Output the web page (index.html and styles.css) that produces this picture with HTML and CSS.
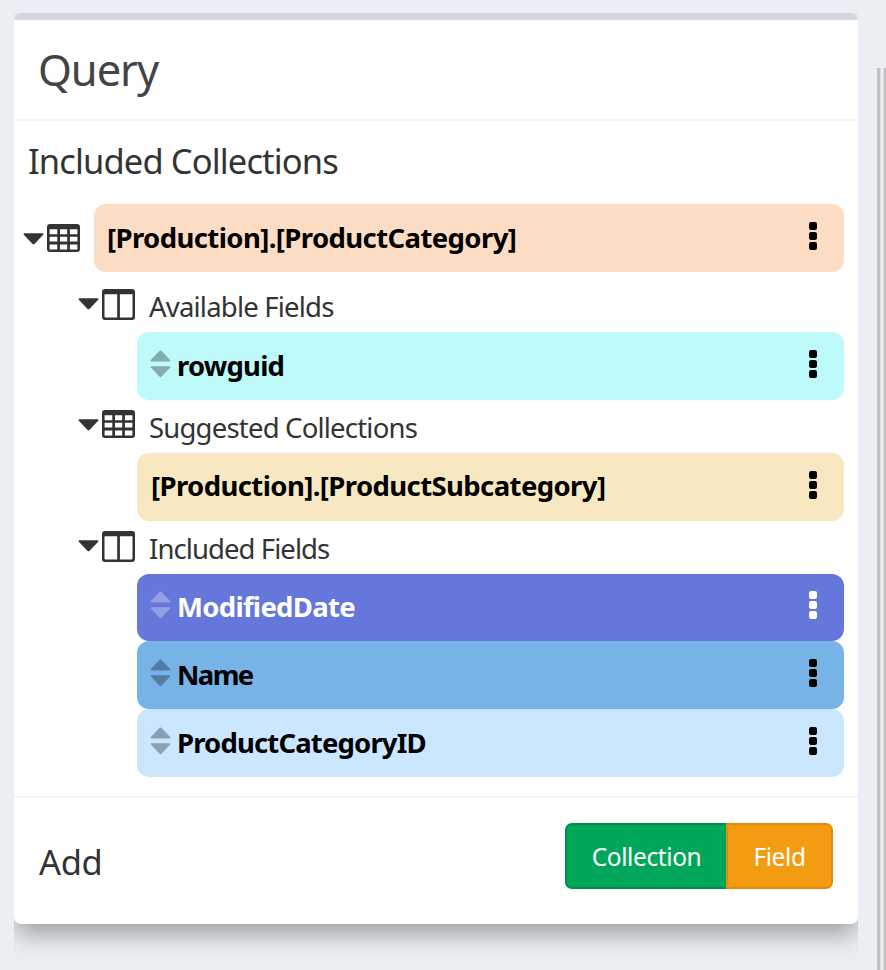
FILE: index.html
```
<!DOCTYPE html>
<html lang="en">
<head>
<meta charset="utf-8">
<title>Query</title>
<link rel="stylesheet" href="styles.css">
</head>
<body>
<svg class="defs" width="0" height="0">
  <symbol id="caret" viewBox="0 0 21 12"><path d="M1.3 0.3H19.7Q21 0.6 20.2 1.7L11.4 10.9Q10.5 11.7 9.6 10.9L0.8 1.7Q0 0.6 1.3 0.3Z" fill="currentColor"/></symbol>
  <symbol id="table" viewBox="0 0 33 28"><path fill-rule="evenodd" fill="currentColor" d="M3 0H30Q33 0 33 3V25Q33 28 30 28H3Q0 28 0 25V3Q0 0 3 0ZM2.6 5.2V10.2H10.3V5.2ZM13 5.2V10.2H20.2V5.2ZM22.9 5.2V10.2H30.4V5.2ZM2.6 12.8V17.6H10.3V12.8ZM13 12.8V17.6H20.2V12.8ZM22.9 12.8V17.6H30.4V12.8ZM2.6 20.4V25.4H10.3V20.4ZM13 20.4V25.4H20.2V20.4ZM22.9 20.4V25.4H30.4V20.4Z"/></symbol>
  <symbol id="columns" viewBox="0 0 33 31"><path fill-rule="evenodd" fill="currentColor" d="M3 0H30Q33 0 33 3V28Q33 31 30 31H3Q0 31 0 28V3Q0 0 3 0ZM2.5 5.2V27.6Q2.5 28.4 3.3 28.4H15.2V5.2ZM17.9 5.2V28.4H29.7Q30.5 28.4 30.5 27.6V5.2Z"/></symbol>
  <symbol id="sort" viewBox="0 0 21 28"><path fill="currentColor" d="M1.3 11.4H19.7Q21 11 20.2 10L11.4 0.8Q10.5 0 9.6 0.8L0.8 10Q0 11 1.3 11.4ZM1.3 16.2H19.7Q21 16.6 20.2 17.6L11.4 26.8Q10.5 27.6 9.6 26.8L0.8 17.6Q0 16.6 1.3 16.2Z"/></symbol>
  <symbol id="dots" viewBox="0 0 8 28"><g fill="currentColor"><rect width="8" height="8" rx="2.2"/><rect y="10" width="8" height="8" rx="2.2"/><rect y="20" width="8" height="8" rx="2.2"/></g></symbol>
</svg>
<main class="pane">
  <section class="card">
    <header class="card-header"><h1>Query</h1></header>
    <div class="card-body">
      <h2>Included Collections</h2>
      <div class="root">
        <svg class="caret"><use href="#caret"/></svg>
        <svg class="table"><use href="#table"/></svg>
        <div class="item peach"><span class="name root-name">[Production].[ProductCategory]</span><svg class="dots"><use href="#dots"/></svg></div>
      </div>
      <div class="group">
        <div class="label"><svg class="caret"><use href="#caret"/></svg><svg class="columns"><use href="#columns"/></svg><span class="available">Available Fields</span></div>
        <div class="item cyan"><svg class="sort"><use href="#sort"/></svg><span class="name rowguid">rowguid</span><svg class="dots"><use href="#dots"/></svg></div>
      </div>
      <div class="group">
        <div class="label"><svg class="caret"><use href="#caret"/></svg><svg class="table"><use href="#table"/></svg><span class="suggested">Suggested Collections</span></div>
        <div class="item cream"><span class="name sub-name">[Production].[ProductSubcategory]</span><svg class="dots"><use href="#dots"/></svg></div>
      </div>
      <div class="group">
        <div class="label"><svg class="caret"><use href="#caret"/></svg><svg class="columns"><use href="#columns"/></svg><span class="included">Included Fields</span></div>
        <div class="item indigo"><svg class="sort"><use href="#sort"/></svg><span class="name modified">ModifiedDate</span><svg class="dots"><use href="#dots"/></svg></div>
        <div class="item blue"><svg class="sort"><use href="#sort"/></svg><span class="name short">Name</span><svg class="dots"><use href="#dots"/></svg></div>
        <div class="item pale"><svg class="sort"><use href="#sort"/></svg><span class="name category">ProductCategoryID</span><svg class="dots"><use href="#dots"/></svg></div>
      </div>
    </div>
    <footer class="card-footer">
      <span class="add">Add</span>
      <div class="buttons"><button class="collection">Collection</button><button class="field">Field</button></div>
    </footer>
  </section>
</main>
<div class="gutter"></div>
</body>
</html>
```
FILE: styles.css
```
* { box-sizing: border-box; }
body {
  margin: 0;
  height: 970px;
  overflow: hidden;
  display: flex;
  background: #ebeef3;
  color: #333;
  font-family: "Noto Sans", "Open Sans", sans-serif;
}
.defs { display: none; }
svg { display: block; flex: none; }
.pane { width: 844px; margin: 13px 0 0 14px; overflow: hidden; }
.card {
  height: 911px;
  background: #fff;
  border-top: 7px solid #d2d6de;
  border-radius: 7px;
  box-shadow: 0 12px 24px -2px rgba(0, 0, 0, .34);
}
h1, h2 { margin: 0; font-weight: 400; white-space: nowrap; }
.card-header { height: 101px; padding-left: 24px; border-bottom: 2px solid #f4f4f4; }
h1 { color: #444; font-size: 43.5px; line-height: 99px; letter-spacing: -1.1px; }
.card-body { height: 675px; padding: 0 14px 0 9px; }
h2 { height: 83px; padding-left: 5px; font-size: 34.5px; line-height: 80px; letter-spacing: -.87px; }
.caret { width: 21px; height: 12px; }
.table { width: 33px; height: 28px; }
.columns { width: 33px; height: 31px; }
.root { display: flex; margin-bottom: 7px; }
.root > .caret { margin-top: 29px; }
.root > .table { margin: 20px 14px 0 3px; }
.item {
  display: flex;
  flex: 1;
  height: 68px;
  padding: 0 27px 0 13px;
  border-radius: 12px;
  color: #000;
}
.name { font-size: 27.5px; font-weight: 700; line-height: 67px; white-space: nowrap; letter-spacing: -.8px; }
.root-name { letter-spacing: -.6px; }
.sub-name { padding-left: 1px; line-height: 65px; letter-spacing: -.6px; }
.modified { line-height: 65px; letter-spacing: -.7px; }
.short { letter-spacing: -1.6px; }
.category { letter-spacing: -.85px; }
.dots { width: 8px; height: 28px; margin: 18px 0 0 auto; }
.group { padding-left: 114px; }
.label {
  display: flex;
  height: 53px;
  margin-left: -59px;
  font-size: 27.5px;
  line-height: 56px;
  white-space: nowrap;
  letter-spacing: -.8px;
}
.included { letter-spacing: -.92px; }
.label .caret { margin-top: 19px; }
.label .table, .label .columns { margin: 10px 14px 0 3px; }
.sort { width: 21px; height: 28px; margin: 18px 6.5px 0 -.5px; opacity: .3; }
.peach { background: #fcdcc3; }
.cyan { background: #bffafb; }
.cream { background: #f8e8c1; }
.indigo { height: 67px; background: #6577da; color: #fff; }
.indigo .sort, .indigo .dots { margin-top: 17px; }
.blue { background: #78b3e8; }
.pale { background: #cbe7ff; }
.card-footer {
  display: flex;
  justify-content: space-between;
  height: 128px;
  padding: 25px 25px 0 25px;
  border-top: 2px solid #f4f4f4;
}
.add { font-size: 34.5px; line-height: 78px; letter-spacing: -.4px; }
.buttons { display: flex; height: 66px; }
button {
  padding: 1px 0 0;
  color: #fff;
  font: 400 24.5px/60px "Noto Sans", "Open Sans", sans-serif;
  letter-spacing: -.4px;
  border: 2px solid;
}
.collection { width: 161px; background: #00a65a; border-color: #008d4c; border-right: 0; border-radius: 7px 0 0 7px; }
.field { width: 107px; background: #f39c12; border-color: #e08e0b; border-radius: 0 7px 7px 0; }
.gutter {
  width: 9px;
  margin: 68px 0 0 auto;
  border: solid #c1c1c1;
  border-width: 0 2px 0 3px;
  background: linear-gradient(90deg, #dcdfe3 1px, #ebeef3 1px 3px, #dcdfe3 3px);
}
```
